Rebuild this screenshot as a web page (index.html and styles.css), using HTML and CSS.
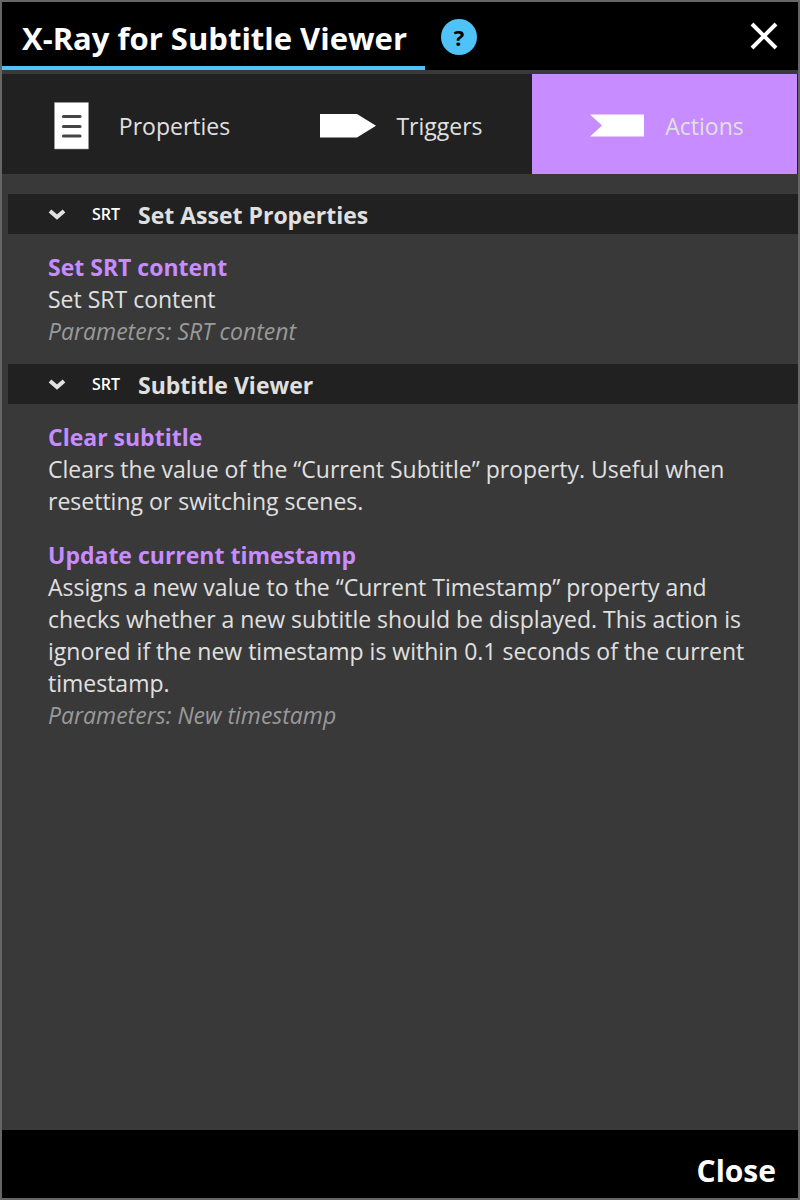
FILE: index.html
```html
<!DOCTYPE html>
<html lang="en">
<head>
<meta charset="utf-8">
<meta name="viewport" content="width=device-width, initial-scale=1">
<title>X-Ray for Subtitle Viewer</title>
<link rel="stylesheet" href="styles.css">
</head>
<body>
<div class="dialog">
  <header class="titlebar">
    <h1 class="title">X-Ray for Subtitle Viewer</h1>
    <button class="help" type="button">?</button>
    <button class="dismiss" type="button" aria-label="Close window">
      <svg width="28" height="28" viewBox="0 0 28 28"><path d="M2 2L26 26M26 2L2 26" stroke="#fff" stroke-width="4" fill="none"/></svg>
    </button>
  </header>
  <nav class="tabs">
    <button class="tab" type="button">
      <svg class="tab-icon" width="64" height="64" viewBox="0 0 64 64"><path d="M15.500 8.500H49.500V55H15.500Z" fill="#fff" stroke="#999" stroke-width=".6"/><path d="M24.500 22.500H41M24.500 32.500H41M24.500 42H41" stroke="#444" stroke-width="3.200" stroke-linecap="round"/></svg>
      <span class="tab-label">Properties</span>
    </button>
    <button class="tab" type="button">
      <svg class="tab-icon" width="64" height="64" viewBox="0 0 64 64"><path d="M4 20H41L60 31.700L41 43.500H4Z" fill="#fff"/></svg>
      <span class="tab-label">Triggers</span>
    </button>
    <button class="tab tab-active" type="button">
      <svg class="tab-icon" width="64" height="64" viewBox="0 0 64 64"><path d="M5 20.500H59V42.500H5L17 31.500Z" fill="#fff"/></svg>
      <span class="tab-label">Actions</span>
    </button>
  </nav>
  <main class="content">
    <section>
      <button class="group" type="button" aria-expanded="true">
        <svg width="18" height="12" viewBox="0 0 18 12"><path d="M2 3L9 9L16 3" stroke="#e0e0e0" stroke-width="4" fill="none"/></svg>
        <span class="kind">SRT</span>
        <span class="group-name">Set Asset Properties</span>
      </button>
      <div class="entries">
        <article>
          <h2 class="name">Set SRT content</h2>
          <p class="text">Set SRT content</p>
          <p class="params">Parameters: SRT content</p>
        </article>
      </div>
    </section>
    <section>
      <button class="group" type="button" aria-expanded="true">
        <svg width="18" height="12" viewBox="0 0 18 12"><path d="M2 3L9 9L16 3" stroke="#e0e0e0" stroke-width="4" fill="none"/></svg>
        <span class="kind">SRT</span>
        <span class="group-name">Subtitle Viewer</span>
      </button>
      <div class="entries">
        <article>
          <h2 class="name">Clear subtitle</h2>
          <p class="text">Clears the value of the “Current Subtitle” property. Useful when resetting or switching scenes.</p>
        </article>
        <article>
          <h2 class="name">Update current timestamp</h2>
          <p class="text">Assigns a new value to the “Current Timestamp” property and checks whether a new subtitle should be displayed. This action is ignored if the new timestamp is within 0.1 seconds of the current timestamp.</p>
          <p class="params">Parameters: New timestamp</p>
        </article>
      </div>
    </section>
  </main>
  <footer class="footer">
    <button class="close" type="button">Close</button>
  </footer>
</div>
</body>
</html>
```
FILE: styles.css
```css
* { box-sizing: border-box; }

body {
  margin: 0;
  background: #393939;
  color: #e0e0e0;
  font: 23px/32px "Segoe UI", "Open Sans", "Noto Sans", sans-serif;
}

h1, h2, p { margin: 0; }

button {
  border: 0;
  padding: 0;
  background: none;
  color: inherit;
  font: inherit;
  cursor: pointer;
}

svg { display: block; flex: none; }

.dialog {
  display: flex;
  flex-direction: column;
  min-height: 100vh;
  border: 2px solid #666;
}

.titlebar {
  display: flex;
  align-items: center;
  background: #000;
  padding-right: 20px;
}

.title {
  padding: 16px 18px 8px 20px;
  border-bottom: 4px solid #4fc3f7;
  color: #fff;
  font-size: 31px;
  line-height: 40px;
}

.help {
  width: 36px;
  height: 36px;
  margin: 2px 0 0 16px;
  border-radius: 50%;
  background: #4fc3f7;
  color: #000;
  font-size: 22px;
  font-weight: 700;
  line-height: 36px;
}

.dismiss { margin-left: auto; }

.tabs {
  display: grid;
  grid-template-columns: repeat(3, 1fr);
  margin-top: 4px;
  padding-right: 1px;
  background: #212121;
}

.tab {
  display: flex;
  align-items: center;
  justify-content: center;
  gap: 16px;
  height: 100px;
  padding-top: 3px;
}

.tab-active { background: #c78cff; }

.content {
  flex: 1;
  padding: 20px 0 20px 6px;
}

.group {
  display: flex;
  align-items: center;
  width: 100%;
  height: 40px;
  padding-left: 40px;
  background: #212121;
  text-align: left;
}

.kind {
  width: 30px;
  margin: 0 16px 0 26px;
  color: #fff;
  font-size: 16px;
  font-weight: 600;
}

.group-name { padding-top: 2px; font-weight: 700; }

.entries {
  display: flex;
  flex-direction: column;
  gap: 22px;
  padding: 17px 40px;
}

.name {
  color: #c78cff;
  font-size: 23px;
}

.params {
  color: #999;
  font-style: italic;
}

.footer {
  display: flex;
  justify-content: flex-end;
  padding: 21px 22px 7px;
  background: #000;
}

.close {
  color: #fff;
  font-size: 30px;
  font-weight: 700;
  line-height: 40px;
}
```
